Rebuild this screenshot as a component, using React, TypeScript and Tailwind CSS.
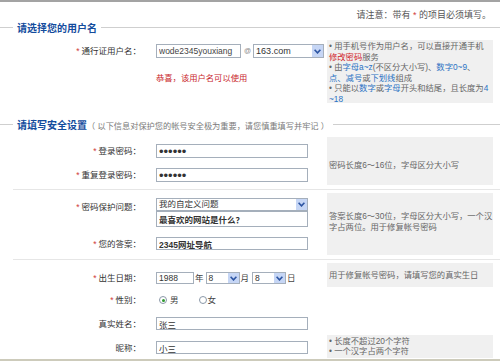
const Chevron = () => (
  <svg width="7" height="5" viewBox="0 0 7 5">
    <path d="M0.6 0.8 L3.5 3.9 L6.4 0.8" fill="none" stroke="#2d55a3" strokeWidth="1.6" />
  </svg>
);

const FakeSelect = ({ value, className }: { value: string; className: string }) => (
  <div className={`flex items-stretch border border-[#a5afbb] bg-white ${className}`}>
    <span className="flex-1 flex items-center pl-[2px] leading-none whitespace-nowrap">{value}</span>
    <span className="w-[11px] flex items-center justify-center bg-[#c6d6f5]">
      <Chevron />
    </span>
  </div>
);

const Label = ({ text, star = true }: { text: string; star?: boolean }) => (
  <div className="w-[141px] shrink-0 text-right text-[8.5px] leading-[10px] text-[#333] whitespace-nowrap">
    {star && <span className="text-[#cf3b3b] mr-[2px]">*</span>}
    {text}：
  </div>
);

const Legend = ({ title, note }: { title: string; note?: string }) => (
  <div className="flex items-center h-[12px] shrink-0">
    <div className="w-[13px] h-px bg-[#cfcfcf]" />
    <div className="px-[4px] whitespace-nowrap leading-none">
      <span className="text-[10px] font-bold text-[#134c9d]">{title}</span>
      {note && <span className="text-[8.2px] text-[#7a7a7a]">{note}</span>}
    </div>
    <div className="flex-1 h-px bg-[#cfcfcf]" />
  </div>
);

const inputCls =
  "border border-[#a5afbb] bg-white px-[2px] py-0 text-[8.5px] text-[#333] outline-none leading-none";

const Radio = ({ checked }: { checked?: boolean }) => (
  <span className="w-[8px] h-[8px] rounded-full border border-[#8a98a8] bg-white flex items-center justify-center">
    {checked && <span className="w-[3px] h-[3px] rounded-full bg-[#2f9a2f]" />}
  </span>
);

const B = ({ children }: { children: string }) => <span className="text-[#2b72c4]">{children}</span>;

export default function App() {
  return (
    <div className="w-[500px] h-[361px] bg-white overflow-hidden flex flex-col text-[#333] font-['Liberation_Sans','Noto_Sans_CJK_SC',sans-serif]">
      <div className="h-[2px] bg-[#a3a3a3] shrink-0" />
      <div className="mt-[8px] h-[10px] leading-[10px] text-right pr-[9px] text-[9px] text-[#555] shrink-0">
        请注意：带有 <span className="text-[#d23c3c]">*</span> 的项目必须填写。
      </div>

      <div className="mt-[1px]">
        <Legend title="请选择您的用户名" />
      </div>

      {/* username */}
      <div className="mt-[7px] flex shrink-0">
        <div className="w-[327px] shrink-0">
          <div className="mt-[4px] flex items-center h-[14px]">
            <Label text="通行证用户名" />
            <input readOnly defaultValue="wode2345youxiang" className={`ml-[15px] h-[14px] w-[85px] text-[#444] ${inputCls}`} />
            <span className="ml-[3px] text-[7px] text-[#888]">@</span>
            <FakeSelect value="163.com" className="ml-[2px] h-[14px] w-[71px] text-[9px]" />
          </div>
          <div className="ml-[156px] mt-[15px] h-[10px] leading-[10px] text-[8.3px] text-[#c9262b] whitespace-nowrap">
            恭喜，该用户名可以使用
          </div>
        </div>
        <div className="w-[166px] h-[63px] bg-[#f0f0f0] pl-[2px] pt-[1px] text-[8.3px] leading-[10.5px] text-[#666] whitespace-nowrap">
          <div>• 用手机号作为用户名，可以直接开通手机</div>
          <div><span className="text-[#d1262b]">修改密码</span>服务</div>
          <div>• 由<B>字母a~z</B>(不区分大小写)、<B>数字0~9</B>、</div>
          <div><B>点、减号</B>或<B>下划线</B>组成</div>
          <div>• 只能以<B>数字</B>或<B>字母</B>开头和结尾，且长度为<B>4</B></div>
          <div><B>~18</B></div>
        </div>
      </div>

      <div className="mt-[15px]">
        <Legend title="请填写安全设置" note="（ 以下信息对保护您的帐号安全极为重要，请您慎重填写并牢记 ）" />
      </div>

      {/* passwords */}
      <div className="mt-[7px] flex shrink-0">
        <div className="w-[327px] shrink-0 pt-[7px]">
          <div className="flex items-center h-[14px]">
            <Label text="登录密码" />
            <input type="password" readOnly defaultValue="123456" className={`ml-[15px] h-[14px] w-[152px] text-[13px] text-[#111] ${inputCls}`} />
          </div>
          <div className="mt-[10px] flex items-center h-[14px]">
            <Label text="重复登录密码" />
            <input type="password" readOnly defaultValue="123456" className={`ml-[15px] h-[14px] w-[152px] text-[13px] text-[#111] ${inputCls}`} />
          </div>
        </div>
        <div className="w-[166px] h-[48px] bg-[#f0f0f0] pl-[2px] pt-[23px] text-[8.3px] leading-[10px] text-[#666] whitespace-nowrap">
          密码长度6～16位，字母区分大小写
        </div>
      </div>

      <div className="mt-[4px] ml-[13px] h-px bg-[#e6e6e6] shrink-0" />

      {/* question */}
      <div className="mt-[3px] flex shrink-0">
        <div className="w-[327px] shrink-0 pt-[5px]">
          <div className="flex">
            <div className="mt-[4px]">
              <Label text="密码保护问题" />
            </div>
            <div className="ml-[15px] flex flex-col">
              <FakeSelect value="我的自定义问题" className="h-[13px] w-[152px] text-[8.5px]" />
              <input readOnly defaultValue="最喜欢的网站是什么？" className={`h-[16px] w-[152px] font-bold ${inputCls}`} />
            </div>
          </div>
          <div className="mt-[10px] flex items-center h-[13px]">
            <Label text="您的答案" />
            <input readOnly defaultValue="2345网址导航" className={`ml-[15px] h-[13px] w-[152px] font-bold ${inputCls}`} />
          </div>
        </div>
        <div className="w-[166px] h-[62px] bg-[#f0f0f0] pl-[2px] pt-[18px] text-[8.3px] leading-[11px] text-[#666] whitespace-nowrap">
          <div>答案长度6～30位，字母区分大小写，一个汉</div>
          <div>字占两位。用于修复帐号密码</div>
        </div>
      </div>

      <div className="mt-[4px] ml-[13px] h-px bg-[#e6e6e6] shrink-0" />

      {/* personal */}
      <div className="mt-[3px] flex shrink-0">
        <div className="w-[327px] shrink-0 pt-[9px]">
          <div className="flex items-center h-[12px] text-[8.5px]">
            <Label text="出生日期" />
            <input readOnly defaultValue="1988" className={`ml-[15px] h-[12px] w-[38px] ${inputCls}`} />
            <span className="ml-[1px] text-[#444]">年</span>
            <FakeSelect value="8" className="ml-[2px] h-[12px] w-[34px]" />
            <span className="ml-[1px] text-[#444]">月</span>
            <FakeSelect value="8" className="ml-[3px] h-[12px] w-[34px]" />
            <span className="ml-[1px] text-[#444]">日</span>
          </div>
          <div className="mt-[10px] flex items-center h-[12px] text-[8.5px] text-[#444]">
            <Label text="性别" />
            <span className="ml-[18px]"><Radio checked /></span>
            <span className="ml-[3px]">男</span>
            <span className="ml-[20px]"><Radio /></span>
            <span className="ml-[1px]">女</span>
          </div>
          <div className="mt-[11px] flex items-center h-[13px]">
            <Label text="真实姓名" star={false} />
            <input readOnly defaultValue="张三" className={`ml-[15px] h-[13px] w-[152px] ${inputCls}`} />
          </div>
          <div className="mt-[11px] flex items-center h-[13px]">
            <Label text="昵称" star={false} />
            <input readOnly defaultValue="小三" className={`ml-[15px] h-[13px] w-[152px] ${inputCls}`} />
          </div>
        </div>
        <div className="w-[166px] flex flex-col">
          <div className="h-[24px] bg-[#f0f0f0] pl-[2px] flex items-center text-[8.3px] text-[#666] whitespace-nowrap">
            用于修复帐号密码，请填写您的真实生日
          </div>
          <div className="mt-[48px] h-[23px] bg-[#f0f0f0] pl-[2px] pt-[1px] text-[8.3px] leading-[10px] text-[#666] whitespace-nowrap">
            <div>• 长度不超过20个字符</div>
            <div>• 一个汉字占两个字符</div>
          </div>
        </div>
      </div>

      <div className="mt-auto h-[2px] bg-[#cdcbbb] shrink-0" />
    </div>
  );
}
